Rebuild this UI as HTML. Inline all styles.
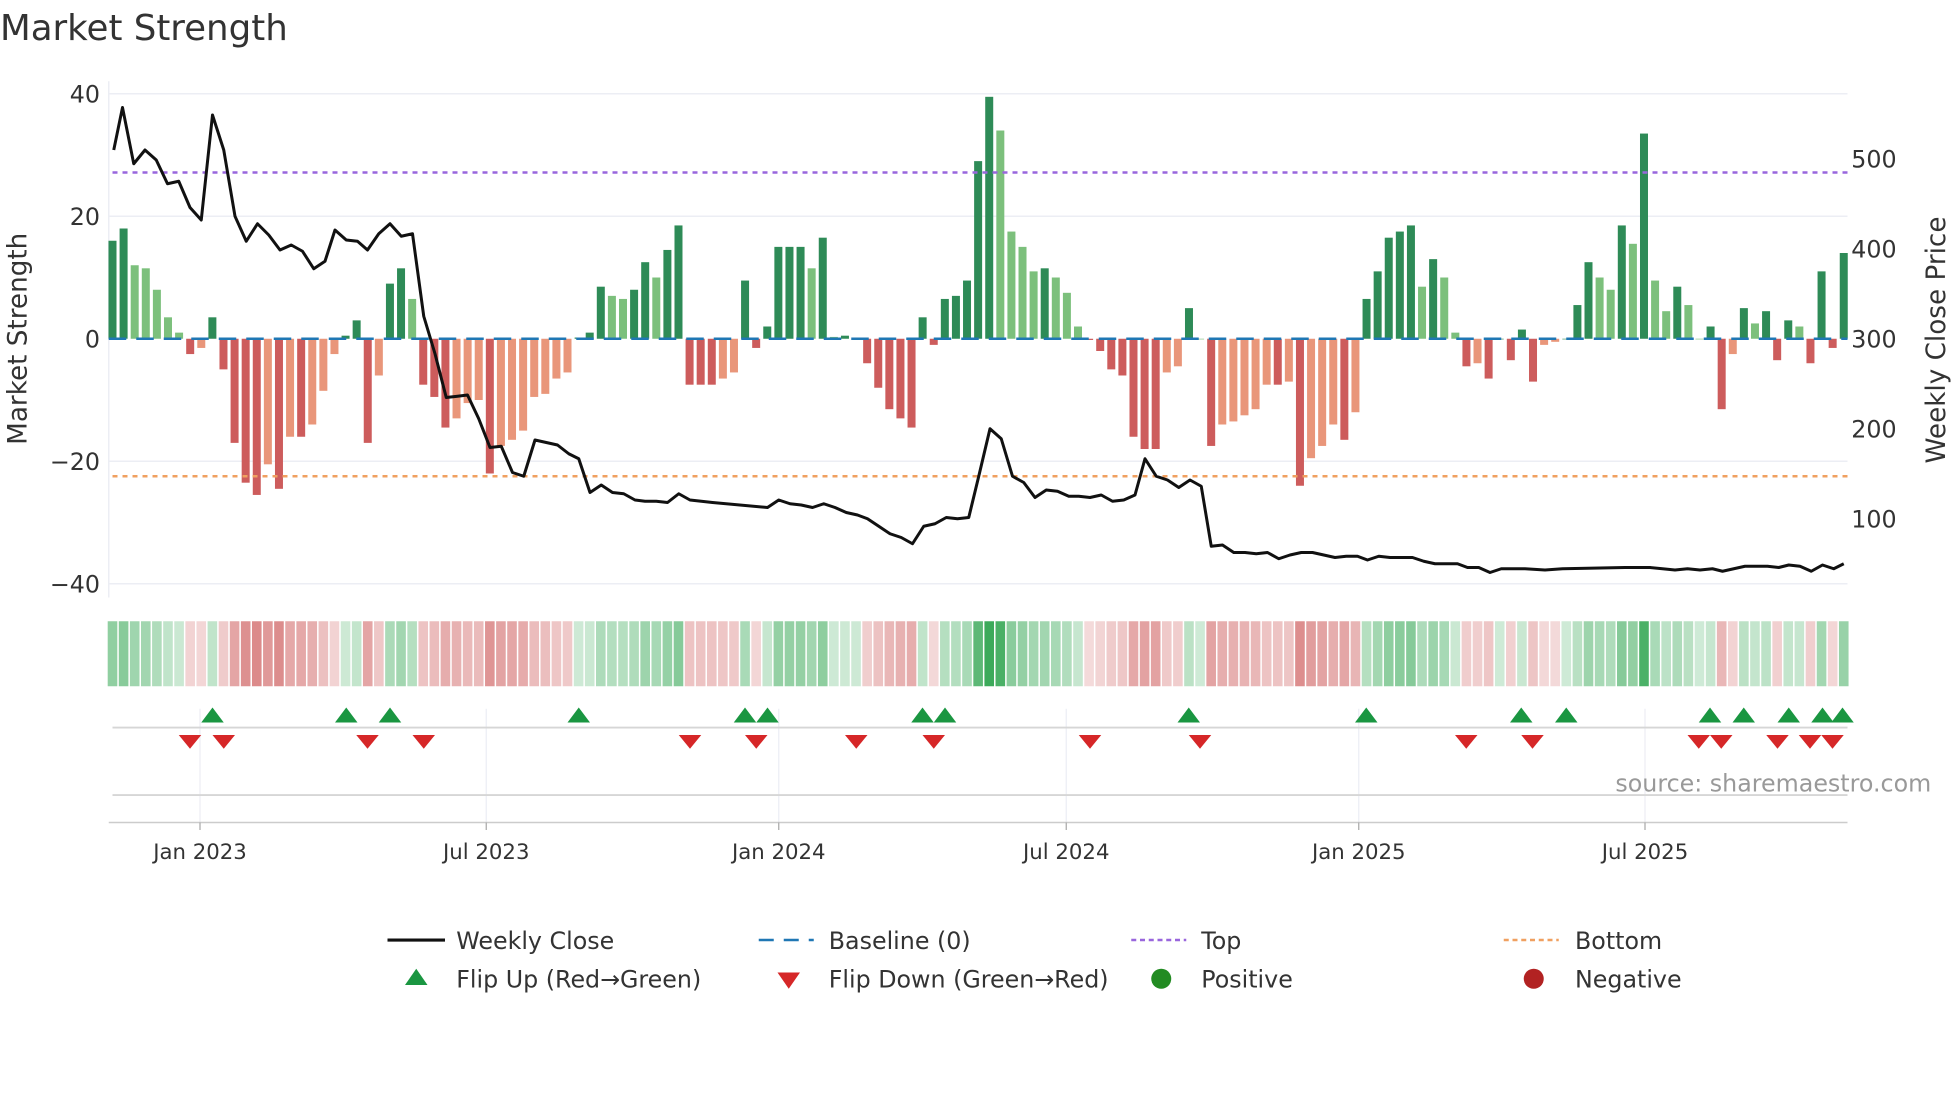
<!DOCTYPE html>
<html><head><meta charset="utf-8"><style>
html,body{margin:0;padding:0;background:#fff;}
svg{display:block;font-family:"DejaVu Sans","Liberation Sans",sans-serif;}
</style></head><body>
<svg id="s" width="1960" height="1102" viewBox="0 0 1568 881.6" xmlns="http://www.w3.org/2000/svg">
<rect width="1568" height="882" fill="#fff"/>
<text x="0" y="32" font-size="28.5" fill="#333">Market Strength</text>
<g stroke="#eceef4" stroke-width="1.2">
<line x1="87" x2="1478" y1="75" y2="75"/><line x1="87" x2="1478" y1="173" y2="173"/>
<line x1="87" x2="1478" y1="369" y2="369"/><line x1="87" x2="1478" y1="467" y2="467"/>
<line x1="87" x2="87" y1="65" y2="478"/>
</g>
<g font-size="19" fill="#333" text-anchor="end">
<text x="80" y="82">40</text><text x="80" y="180">20</text><text x="80" y="278">0</text>
<text x="80" y="376">−20</text><text x="80" y="474">−40</text>
</g>
<g font-size="19" fill="#333">
<text x="1481" y="134">500</text><text x="1481" y="206">400</text><text x="1481" y="278">300</text>
<text x="1481" y="350">200</text><text x="1481" y="422">100</text>
</g>
<text transform="translate(21,271) rotate(-90)" font-size="21" fill="#333" text-anchor="middle">Market Strength</text>
<text transform="translate(1556,272) rotate(-90)" font-size="21" fill="#333" text-anchor="middle">Weekly Close Price</text>
<g id="bars"></g>
<line x1="87" x2="1478" y1="271" y2="271" stroke="#1f77b4" stroke-width="2" stroke-dasharray="14,8"/>
<line x1="90" x2="1478" y1="138" y2="138" stroke="#9966dd" stroke-width="2" stroke-dasharray="4,4"/>
<line x1="90" x2="1478" y1="381" y2="381" stroke="#f0a060" stroke-width="2" stroke-dasharray="4,4"/>
<polyline id="price" fill="none" stroke="#111" stroke-width="2.4" stroke-linejoin="round"/>
<g id="heat"></g>
<g stroke="#eceef4" stroke-width="1">
<line x1="160" x2="160" y1="567" y2="658"/><line x1="389" x2="389" y1="567" y2="658"/>
<line x1="623" x2="623" y1="567" y2="658"/><line x1="853" x2="853" y1="567" y2="658"/>
<line x1="1087" x2="1087" y1="567" y2="658"/><line x1="1316" x2="1316" y1="567" y2="658"/>
</g>
<line x1="90" x2="1478" y1="582" y2="582" stroke="#d6d6d6" stroke-width="1.5"/>
<line x1="90" x2="1478" y1="636" y2="636" stroke="#d6d6d6" stroke-width="1.5"/>
<line x1="87" x2="1478" y1="658" y2="658" stroke="#cccccc" stroke-width="1.2"/>
<g id="tri"></g>
<text x="1545" y="633" font-size="19" fill="#999" text-anchor="end">source: sharemaestro.com</text>
<g stroke="#aaa"><line x1="160" x2="160" y1="658" y2="664"/><line x1="389" x2="389" y1="658" y2="664"/><line x1="623" x2="623" y1="658" y2="664"/><line x1="853" x2="853" y1="658" y2="664"/><line x1="1087" x2="1087" y1="658" y2="664"/><line x1="1316" x2="1316" y1="658" y2="664"/></g>
<g font-size="17" fill="#333" text-anchor="middle">
<text x="160" y="687">Jan 2023</text><text x="389" y="687">Jul 2023</text><text x="623" y="687">Jan 2024</text>
<text x="853" y="687">Jul 2024</text><text x="1087" y="687">Jan 2025</text><text x="1316" y="687">Jul 2025</text>
</g>
<g font-size="19" fill="#333">
<line x1="310" x2="356" y1="752" y2="752" stroke="#111" stroke-width="2.5"/>
<text x="365" y="759">Weekly Close</text>
<line x1="607" x2="651" y1="752" y2="752" stroke="#1f77b4" stroke-width="2" stroke-dasharray="12,8"/>
<text x="663" y="759">Baseline (0)</text>
<line x1="905" x2="949" y1="752" y2="752" stroke="#9966dd" stroke-width="2" stroke-dasharray="4,3"/>
<text x="961" y="759">Top</text>
<line x1="1203" x2="1247" y1="752" y2="752" stroke="#f0a060" stroke-width="2" stroke-dasharray="4,3"/>
<text x="1260" y="759">Bottom</text>
<polygon points="324,788 342,788 333,775" fill="#1a9641"/>
<text x="365" y="790">Flip Up (Red→Green)</text>
<polygon points="622,778 640,778 631,791" fill="#d62728"/>
<text x="663" y="790">Flip Down (Green→Red)</text>
<circle cx="929" cy="783" r="8" fill="#228b22"/>
<text x="961" y="790">Positive</text>
<circle cx="1227" cy="783" r="8" fill="#b22222"/>
<text x="1260" y="790">Negative</text>
</g>
</svg>
<script>
var v=[16,18,12,11.5,8,3.5,1,-2.5,-1.5,3.5,-5,-17,-23.5,-25.5,-20.5,-24.5,-16,-16,-14,-8.5,-2.5,0.5,3,-17,-6,9,11.5,6.5,-7.5,-9.5,-14.5,-13,-10.5,-10,-22,-17.5,-16.5,-15,-9.5,-9,-6.5,-5.5,0.2,1,8.5,7,6.5,8,12.5,10,14.5,18.5,-7.5,-7.5,-7.5,-6.5,-5.5,9.5,-1.5,2,15,15,15,11.5,16.5,0.3,0.5,0.2,-4,-8,-11.5,-13,-14.5,3.5,-1,6.5,7,9.5,29,39.5,34,17.5,15,11,11.5,10,7.5,2,-0.2,-2,-5,-6,-16,-18,-18,-5.5,-4.5,5,0,-17.5,-14,-13.5,-12.5,-11.5,-7.5,-7.5,-7,-24,-19.5,-17.5,-14,-16.5,-12,6.5,11,16.5,17.5,18.5,8.5,13,10,1,-4.5,-4,-6.5,0,-3.5,1.5,-7,-1,-0.5,0,5.5,12.5,10,8,18.5,15.5,33.5,9.5,4.5,8.5,5.5,0,2,-11.5,-2.5,5,2.5,4.5,-3.5,3,2,-4,11,-1.5,14];
var NS="http://www.w3.org/2000/svg";
function el(t,a,p){var e=document.createElementNS(NS,t);for(var k in a)e.setAttribute(k,a[k]);p.appendChild(e);return e;}
var bars=document.getElementById('bars'),heat=document.getElementById('heat');
var n=v.length,x0=90,dx=(1475-90)/(n-1);
for(var i=0;i<n;i++){
 var x=x0+i*dx,val=v[i],prev=i?v[i-1]:0,c;
 if(val>=0)c=(val>=prev)?'#2e8b57':'#7cc07c';else c=(val<=prev)?'#cd5c5c':'#e9967a';
 var h=Math.abs(val)*4.9;
 el('rect',{x:x-3.2,y:val>=0?271-h:271,width:6.4,height:Math.max(h,0.5),fill:c},bars);
 var hc=val>=0?'rgba(60,170,90,'+(0.25+Math.abs(val)/40*0.8)+')':'rgba(205,90,90,'+(0.22+Math.abs(val)/26*0.5)+')';
 el('rect',{x:x-dx/2+0.6,y:497,width:dx-1.2,height:52,fill:hc},heat);
}
var p=[[91,120],[98,86],[107,131],[116,120],[125,128],[134,147],[143,145],[152,166],[161,176],[170,92],[179,120],[188,173],[197,193],[206,179],[215,188],[224,200],[233,196],[242,201],[251,215],[260,209],[268,184],[277,192],[286,193],[294,200],[303,187],[312,179],[321,189],[330,187],[339,253],[348,283],[357,318],[366,317],[374,316],[383,335],[392,358],[401,357],[410,378],[419,381],[428,352],[437,354],[446,356],[455,363],[463,367],[472,394],[481,388],[490,394],[499,395],[508,400],[516,401],[525,401],[534,402],[543,395],[552,400],[561,401],[570,402],[614,406],[623,400],[632,403],[641,404],[650,406],[659,403],[668,406],[677,410],[686,412],[694,415],[703,421],[712,427],[721,430],[730,435],[739,421],[748,419],[757,414],[766,415],[775,414],[783,381],[792,343],[801,351],[810,381],[819,386],[828,398],[837,392],[846,393],[855,397],[863,397],[872,398],[881,396],[890,401],[899,400],[908,396],[916,367],[925,381],[934,384],[943,390],[952,384],[961,389],[969,437],[978,436],[987,442],[996,442],[1005,443],[1014,442],[1023,447],[1032,444],[1041,442],[1050,442],[1059,444],[1068,446],[1077,445],[1086,445],[1094,448],[1103,445],[1112,446],[1121,446],[1130,446],[1139,449],[1148,451],[1157,451],[1166,451],[1174,454],[1183,454],[1192,458],[1201,455],[1220,455],[1236,456],[1250,455],[1300,454],[1320,454],[1330,455],[1340,456],[1350,455],[1360,456],[1370,455],[1378,457],[1387,455],[1396,453],[1414,453],[1423,454],[1431,452],[1440,453],[1449,457],[1458,452],[1467,455],[1475,451]];
document.getElementById('price').setAttribute('points',p.map(function(q){return q.join(',')}).join(' '));
var tri=document.getElementById('tri');
[170,277,312,463,596,614,738,756,951,1093,1217,1253,1368,1395,1431,1458,1474].forEach(function(x){el('polygon',{points:(x-9)+',578 '+(x+9)+',578 '+x+',566',fill:'#1a9641'},tri);});
[152,179,294,339,552,605,685,747,872,960,1173,1226,1359,1377,1422,1448,1466].forEach(function(x){el('polygon',{points:(x-9)+',588 '+(x+9)+',588 '+x+',599',fill:'#d62728'},tri);});
</script>
</body></html>
